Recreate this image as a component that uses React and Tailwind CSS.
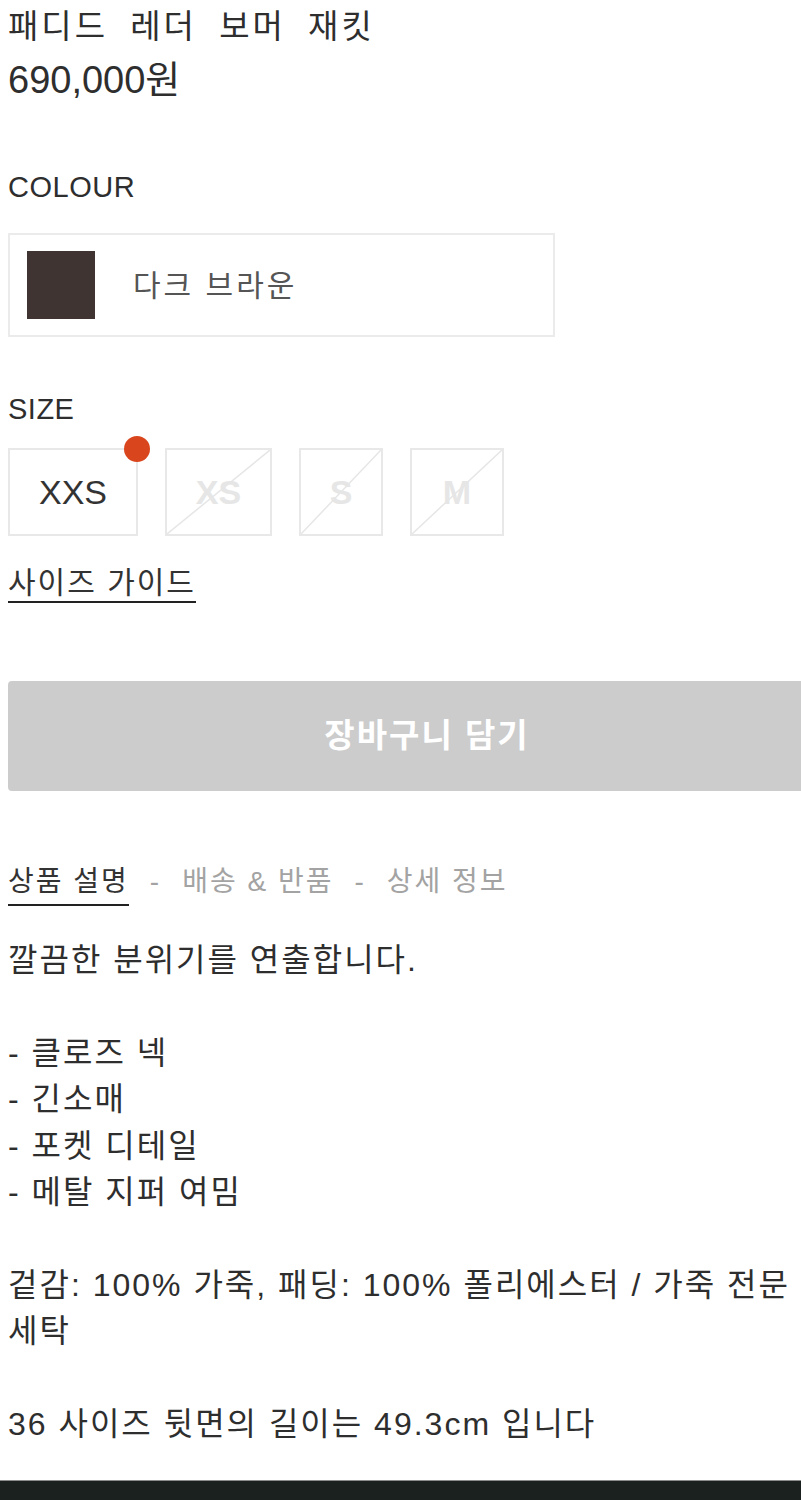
import React from "react";

const sizes = [
  { label: "XXS", width: "w-[130px]", available: true },
  { label: "XS", width: "w-[107px]", available: false },
  { label: "S", width: "w-[84px]", available: false },
  { label: "M", width: "w-[94px]", available: false },
];

const description = [
  "깔끔한 분위기를 연출합니다.",
  "",
  "- 클로즈 넥",
  "- 긴소매",
  "- 포켓 디테일",
  "- 메탈 지퍼 여밈",
  "",
  "겉감: 100% 가죽, 패딩: 100% 폴리에스터 / 가죽 전문 세탁",
  "",
  "36 사이즈 뒷면의 길이는 49.3cm 입니다",
];

export default function App() {
  return (
    <div className="w-[801px] h-[1500px] overflow-hidden bg-white text-[#2e2e2e] font-['Liberation_Sans','Noto_Sans_CJK_KR',sans-serif]">
      <div className="px-[8px] pt-[5px]">
        {/* Title + price */}
        <h1 className="text-[33px] leading-[44px] tracking-[3px] [word-spacing:10px] whitespace-nowrap">
          패디드 레더 보머 재킷
        </h1>
        <p className="mt-[9px] text-[38px] leading-[44px]">690,000원</p>

        {/* Colour */}
        <p className="mt-[69px] text-[29px] leading-[32px] tracking-[0.5px]">COLOUR</p>
        <div className="mt-[30px] flex h-[104px] w-[547px] items-center gap-[38px] border-2 border-[#ebebeb] pl-[17px]">
          <span className="h-[68px] w-[68px] bg-[#3f3431]" />
          <span className="text-[30px] tracking-[3px] text-[#555]">다크 브라운</span>
        </div>

        {/* Size */}
        <p className="mt-[56px] text-[29px] leading-[32px] tracking-[0.5px]">SIZE</p>
        <div className="mt-[23px] flex gap-[27px]">
          {sizes.map((s) => (
            <SizeBox key={s.label} {...s} />
          ))}
        </div>

        <div className="mt-[29px]">
          <span className="inline-block border-b-2 border-[#222] text-[30px] leading-[36px] tracking-[2px] text-[#333]">
            사이즈 가이드
          </span>
        </div>

        {/* Add to bag */}
        <button className="mt-[78px] flex h-[110px] w-[838px] items-center justify-center rounded-[4px] bg-[#cccccc] text-[33px] font-bold tracking-[2px] text-white">
          장바구니 담기
        </button>

        {/* Tabs */}
        <div className="mt-[75px] flex items-start gap-[21px] text-[28px] leading-[32px] tracking-[2px] text-[#a3a3a3]">
          <span className="border-b-2 border-[#222] pb-[6px] text-[#333]">상품 설명</span>
          <span>-</span>
          <span>배송 &amp; 반품</span>
          <span>-</span>
          <span>상세 정보</span>
        </div>

        {/* Description */}
        <div className="mt-[31px] break-keep text-[32px] leading-[46.4px] tracking-[2px] text-[#2e2e2e]">
          {description.map((line, i) =>
            line ? <p key={i}>{line}</p> : <p key={i} className="h-[46.4px]" />
          )}
        </div>
      </div>

      <div className="mt-[33px] h-[20px] border-t border-[#8c8c8c] bg-[#1b211e]" />
    </div>
  );
}

function SizeBox({ label, width, available }) {
  return (
    <div
      className={`relative flex h-[88px] ${width} items-center justify-center border-2 border-[#e8e8e8] text-[34px] ${
        available ? "text-[#333]" : "font-bold text-[#e6e6e6]"
      }`}
    >
      {label}
      {!available && (
        <svg className="absolute inset-0 h-full w-full" preserveAspectRatio="none" viewBox="0 0 100 100">
          <line x1="0" y1="100" x2="100" y2="0" stroke="#e6e6e6" strokeWidth="1.5" vectorEffect="non-scaling-stroke" />
        </svg>
      )}
      {available && (
        <span className="absolute -right-[14px] -top-[14px] h-[26px] w-[26px] rounded-full bg-[#d9461e]" />
      )}
    </div>
  );
}
